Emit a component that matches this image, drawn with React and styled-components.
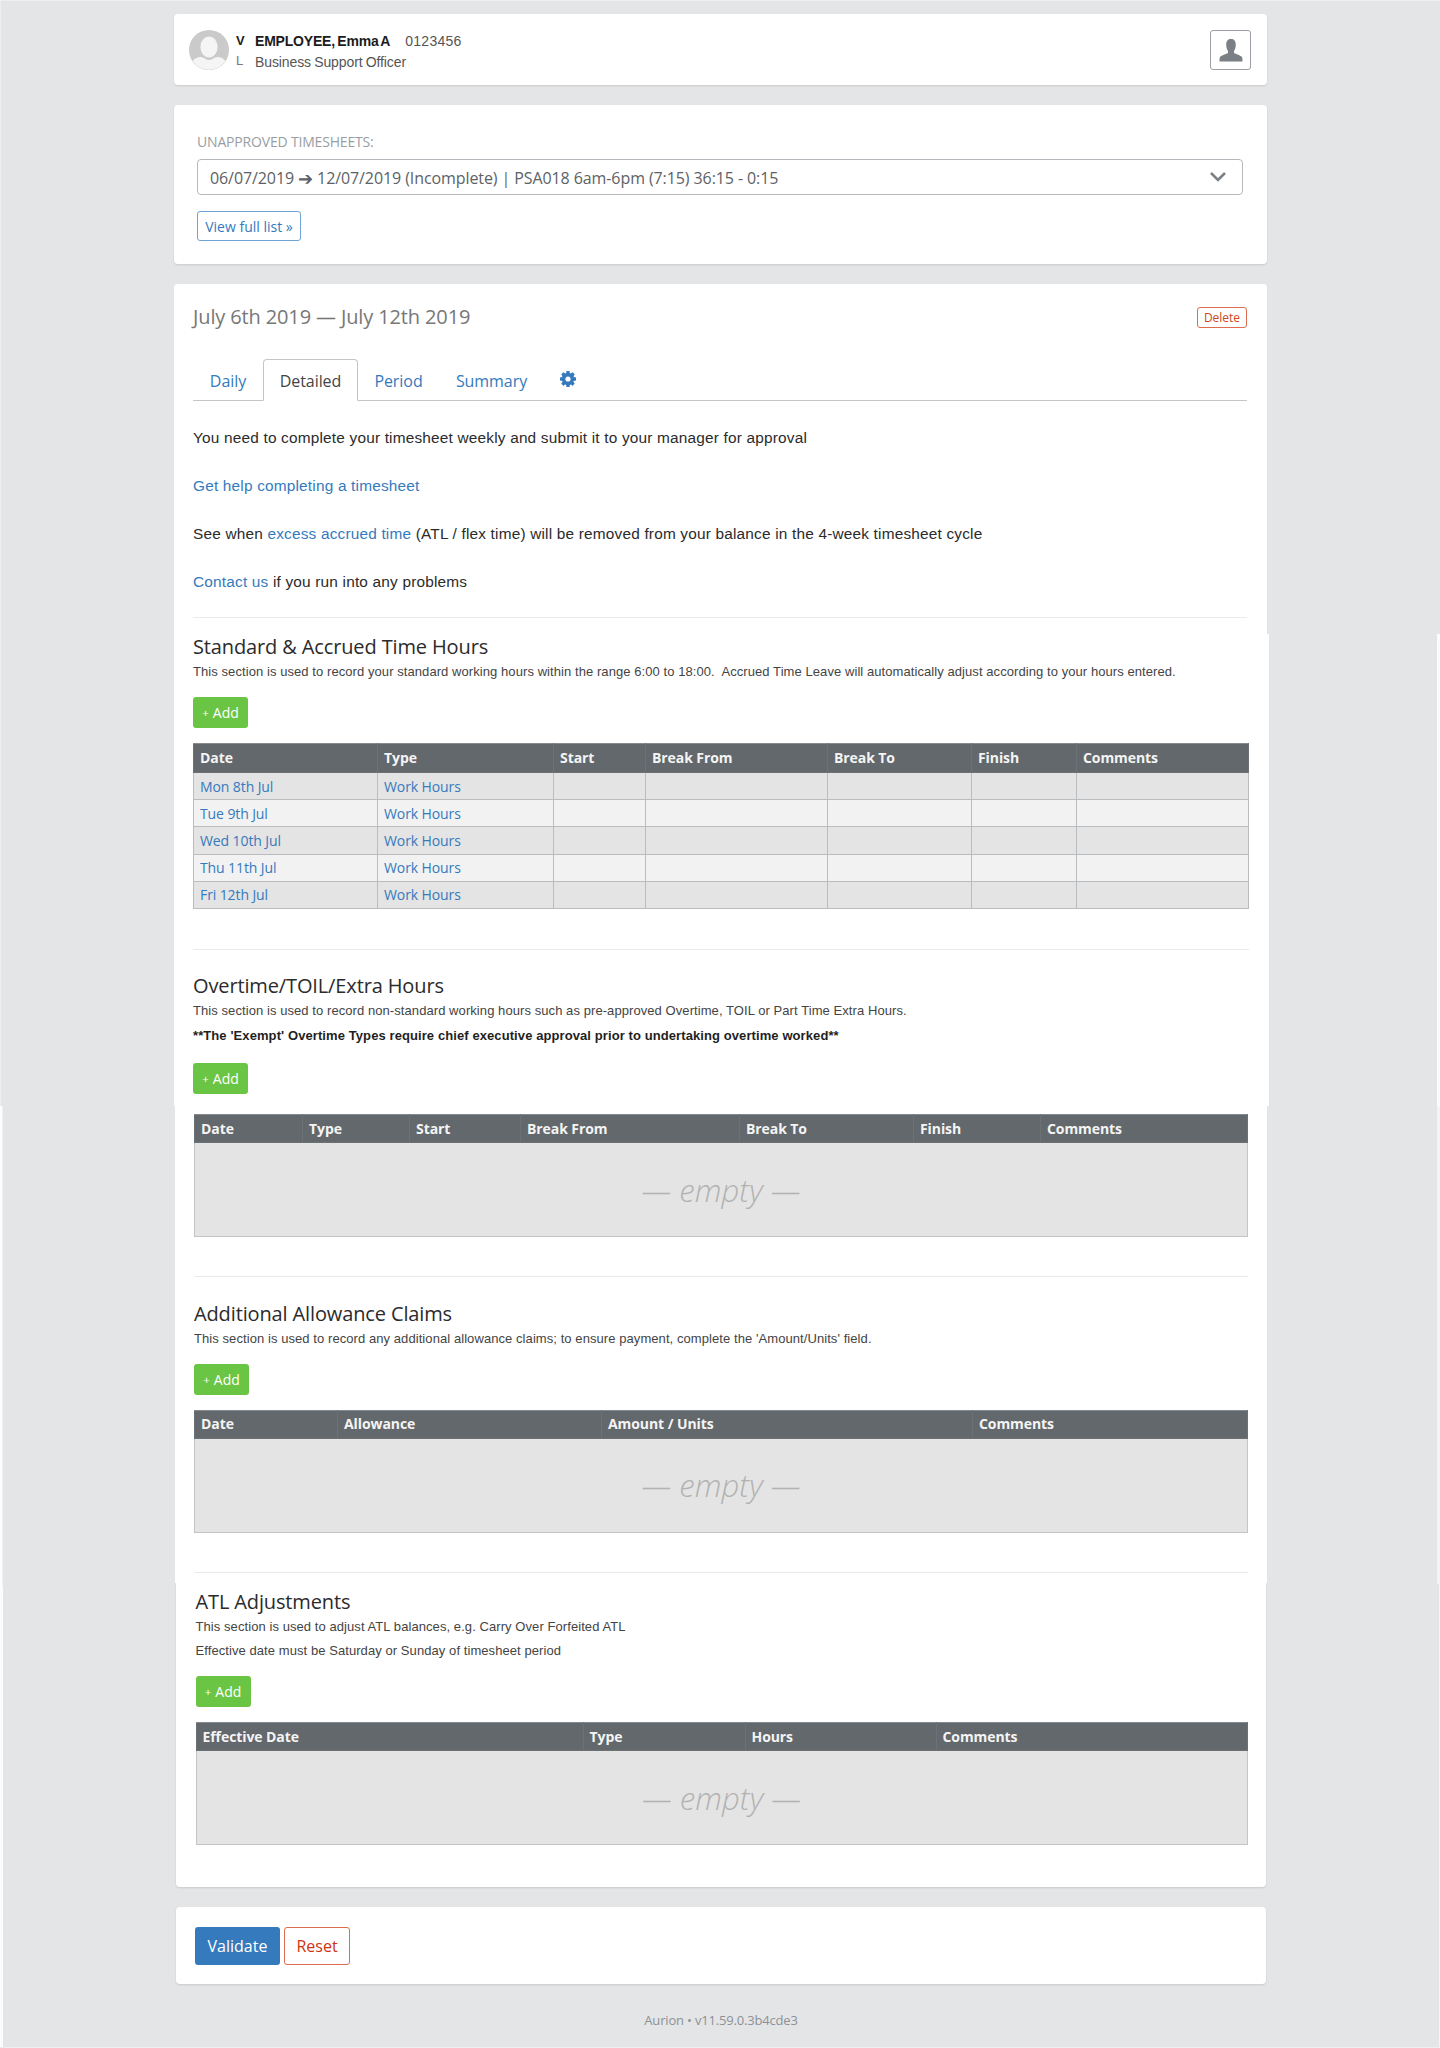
import React from "react";
import styled, { createGlobalStyle, css } from "styled-components";

const sans = `"Open Sans", "Noto Sans", sans-serif`;
const arial = `"Liberation Sans", Arial, sans-serif`;

const Global = createGlobalStyle`
  *, *::before, *::after { box-sizing: border-box; }
  body { margin: 0; background: #e4e5e7; font-family: ${sans}; color: #222; }
`;

/* Thin light strips run down both outer edges of the page. */
const Page = styled.div`
  height: 2048px;
  padding: 13px 0 0;
  border-top: 1px solid #edeef0;
  border-bottom: 1px solid #edeef0;
  overflow: hidden;
  display: flex;
  flex-direction: column;
  background:
    linear-gradient(90deg, #fdfdfd 2px, #f0f2f4 2px) 0 1105px / 3px 480px no-repeat,
    linear-gradient(#fcfcfc, #fcfcfc) 0 1585px / 3px 462px no-repeat,
    linear-gradient(#eeeff1, #eeeff1) 0 0 / 1px 1105px no-repeat,
    linear-gradient(#fcfcfc, #fcfcfc) 1437px 633px / 3px 472px no-repeat,
    linear-gradient(#f4f4f5, #f4f4f5) 1437px 1105px / 3px 478px no-repeat,
    linear-gradient(#f4f4f5, #f4f4f5) 1439px 1583px / 1px 464px no-repeat,
    #e4e5e7;
`;

const Card = styled.section`
  background: #fff;
  border-radius: 4px;
  box-shadow: 0 1px 2px rgba(0, 0, 0, 0.12);
  width: ${(p) => p.$w || 1093}px;
  height: ${(p) => p.$h}px;
  margin: 0 0 20px ${(p) => p.$x || 174}px;
  flex: none;
`;

const Profile = styled(Card)`
  display: flex;
  align-items: flex-start;
  padding: 16px 16px 0 15px;
`;

const Avatar = styled.svg`
  width: 40px;
  height: 40px;
  flex: none;
`;

const Initials = styled.div`
  width: 10px;
  margin-left: 7px;
  font: 400 13px/19px ${arial};
  color: #777;
  display: flex;
  flex-direction: column;
  b { color: #222; line-height: 21px; }
`;

const Identity = styled.div`
  margin: 1px 0 0 9px;
  font: 400 14px/20.500px ${arial};
  color: #555;
  flex: 1;
  white-space: nowrap;
`;

const Name = styled.b`
  color: #1c1c1c;
  margin-right: 15px;
  letter-spacing: -0.2px;
  word-spacing: -1.3px;
`;

const StaffNumber = styled.span`
  letter-spacing: 0.25px;
`;

const Role = styled.div`
  letter-spacing: -0.1px;
  word-spacing: -0.6px;
`;

const UserButton = styled.button`
  width: 41px;
  height: 40px;
  padding: 0;
  border: 1px solid #9aa0a5;
  border-radius: 3px;
  background: #fff;
  display: flex;
  align-items: center;
  justify-content: center;
`;

const Picker = styled(Card)`
  padding: 24px 24px 0 23px;
`;

const Label = styled.div`
  font-size: 14px;
  line-height: 25px;
  color: #999ea3;
  letter-spacing: -0.18px;
`;

const Select = styled.div`
  margin: 5px 0 16px;
  height: 36px;
  border: 1px solid #b4b8bc;
  border-radius: 4px;
  display: flex;
  align-items: center;
  justify-content: space-between;
  padding: 0 16px 0 12px;
  font-size: 16px;
  line-height: 34px;
  color: #5d6266;
`;

const Period = styled.span`
  display: flex;
  padding-top: 2px;
  white-space: pre;
  letter-spacing: -0.09px;
`;

const Arrow = styled.span`
  font-size: 18px;
`;

const outline = css`
  background: #fff;
  border: 1px solid ${(p) => p.$line};
  color: ${(p) => p.$color};
`;

const Button = styled.button`
  font-family: ${sans};
  font-size: ${(p) => p.$fs || 14}px;
  width: ${(p) => p.$w}px;
  height: ${(p) => p.$h}px;
  margin: ${(p) => p.$mt || 0}px 0 0;
  padding: 0;
  border: 0;
  border-radius: 3px;
  background: ${(p) => p.$bg || "#fff"};
  color: #fff;
  display: flex;
  align-items: center;
  justify-content: center;
  white-space: nowrap;
  ${(p) => p.$line && outline}
`;

const Plus = styled.span`
  font-size: 11.500px;
  margin-right: 4px;
`;

const Sheet = styled.main`
  display: flex;
  flex-direction: column;
  margin-bottom: 20px;
  flex: none;
`;

const Part = styled.section`
  background: #fff;
  width: ${(p) => p.$w}px;
  height: ${(p) => p.$h}px;
  margin-left: ${(p) => p.$x}px;
  padding: ${(p) => p.$pad};
  display: flow-root;
  border-radius: ${(p) => (p.$first ? "4px 4px 0 0" : p.$last ? "0 0 4px 4px" : "0")};
  box-shadow: ${(p) => (p.$last ? "0 1px 2px rgba(0,0,0,.12)" : "none")};
`;

const TitleRow = styled.div`
  display: flex;
  justify-content: space-between;
  align-items: center;
  height: 26px;
`;

const Title = styled.h1`
  margin: 0;
  font-weight: 400;
  font-size: 20px;
  line-height: 26px;
  color: #777;
  letter-spacing: -0.13px;
`;

const Tabs = styled.nav`
  margin-top: 29px;
  height: 42px;
  border-bottom: 1px solid #c3c6c9;
  display: flex;
`;

const Tab = styled.a`
  width: ${(p) => p.$w}px;
  height: 42px;
  font-size: 16px;
  line-height: 44px;
  letter-spacing: -0.06px;
  text-align: center;
  color: #357abd;
  ${(p) =>
    p.$active &&
    css`
      color: #444;
      background: #fff;
      border: 1px solid #c3c6c9;
      border-bottom-color: #fff;
      border-radius: 4px 4px 0 0;
      line-height: 42px;
    `}
`;

const Gear = styled.svg`
  width: 16px;
  height: 16px;
  margin: 12px 0 0 16px;
`;

const Note = styled.p`
  margin: 0;
  font: 400 15.400px/48.100px ${arial};
  color: #2b2b2b;
  white-space: nowrap;
  letter-spacing: 0.186px;
  a { color: #357abd; }
`;

const Notes = styled.div`
  margin-top: 12.500px;
`;

const Rule = styled.hr`
  border: 0;
  height: 1px;
  background: #eaeaec;
  margin: ${(p) => p.$mt}px 0 0;
`;

const Heading = styled.h2`
  margin: ${(p) => p.$mt}px 0 0;
  font-weight: 400;
  font-size: 20px;
  line-height: 28px;
  color: #2b2b2b;
  letter-spacing: -0.13px;
`;

const Desc = styled.p`
  margin: 0;
  font: ${(p) => (p.$bold ? 700 : 400)} 13px/${(p) => p.$lh || 22}px ${arial};
  color: ${(p) => (p.$bold ? "#1f1f1f" : "#444")};
  letter-spacing: ${(p) => (p.$bold ? 0.09 : 0.073)}px;
  white-space: pre;
`;

const AddRow = styled.div`
  margin: ${(p) => p.$mt}px 0 ${(p) => p.$mb}px;
`;

const Table = styled.table`
  border-collapse: collapse;
  table-layout: fixed;
  width: ${(p) => p.$w}px;
`;

const Th = styled.th`
  height: ${(p) => p.$h}px;
  padding: 0 6px;
  background: #63686c;
  border: 1px solid #6c7175;
  border-top-color: #868b8f;
  color: #f4f4f4;
  text-align: left;
  font-size: 14px;
  font-weight: 700;
  line-height: 20px;
  letter-spacing: -0.08px;
`;

const Td = styled.td`
  height: 27.200px;
  padding: 1px 6px 0;
  background: ${(p) => (p.$odd ? "#f2f2f2" : "#e4e4e4")};
  border: 1px solid #b9bdc0;
  color: #357abd;
  font-size: 14px;
  line-height: 20px;
  letter-spacing: -0.1px;
`;

const Empty = styled.td`
  height: 94px;
  background: #e4e4e4;
  border: 1px solid #c2c5c8;
  text-align: center;
  font: italic 300 31.200px/40px ${sans};
  color: #b2b2b2;
  padding: 0;
`;

const Actions = styled(Card)`
  display: flex;
  gap: 4px;
  padding: 20px 19px;
`;

const Footer = styled.footer`
  margin-top: 6px;
  padding-left: 2px;
  text-align: center;
  font-size: 13px;
  line-height: 20px;
  letter-spacing: -0.18px;
  color: #8c9196;
`;

function Add() {
  return <Button $w={55} $h={31} $bg="#6bc544"><Plus>+</Plus>Add</Button>;
}

function Grid({ width, columns, rows }) {
  return (
    <Table $w={width}>
      <colgroup>{columns.map(([n, w]) => <col key={n} style={{ width: w }} />)}</colgroup>
      <thead><tr>{columns.map(([n]) => <Th key={n} $h={rows ? 29 : 28}>{n}</Th>)}</tr></thead>
      <tbody>
        {rows ? rows.map((r, i) => (
          <tr key={r}>
            {columns.map(([n], c) => (
              <Td key={n} $odd={i % 2 === 1}>{c === 0 ? r : c === 1 ? "Work Hours" : ""}</Td>
            ))}
          </tr>
        )) : <tr><Empty colSpan={columns.length}>— empty —</Empty></tr>}
      </tbody>
    </Table>
  );
}

export default function App() {
  return (
    <>
      <Global />
      <Page>
        <Profile $h={71}>
          <Avatar viewBox="0 0 40 40">
            <circle cx="20" cy="20" r="20" fill="#cacaca" />
            <ellipse cx="20" cy="17" rx="8.6" ry="10.5" fill="#f5f5f5" />
            <path d="M3.5 31C7 27 12 26 15 28Q20 32 25 28C29 26 33 27 36.500 31A20 20 0 0 1 3.500 31Z" fill="#f5f5f5" />
          </Avatar>
          <Initials><b>V</b><span>L</span></Initials>
          <Identity>
            <div><Name>EMPLOYEE, Emma A</Name><StaffNumber>0123456</StaffNumber></div>
            <Role>Business Support Officer</Role>
          </Identity>
          <UserButton>
            <svg width="24" height="23" viewBox="0 0 24 23">
              <path d="M12 0C9 0 7.200 2 7.200 5.500C7.200 8.500 8.200 11 9 12V14C6 15.500 3 16.300 1.500 17.500C.6 18.300.5 20 .5 22.500H23.500C23.500 20 23.400 18.300 22.500 17.500C21 16.300 18 15.500 15 14V12C15.800 11 16.800 8.500 16.800 5.500C16.800 2 15 0 12 0Z" fill="#7a8085" />
            </svg>
          </UserButton>
        </Profile>

        <Picker $h={159}>
          <Label>UNAPPROVED TIMESHEETS:</Label>
          <Select>
            <Period>06/07/2019 <Arrow>➔</Arrow> 12/07/2019 (Incomplete) | PSA018 6am-6pm (7:15) 36:15 - 0:15</Period>
            <svg width="16" height="10" viewBox="0 0 16 10" fill="none" stroke="#7a8085" strokeWidth="2.600"><path d="M1 1L8 8L15 1" /></svg>
          </Select>
          <Button $w={104} $h={30} $line="#6ea3d6" $color="#357abd">View full list »</Button>
        </Picker>

        <Sheet>
          <Part $first $x={174} $w={1093} $h={350} $pad="20px 20px 0 19px">
            <TitleRow>
              <Title>July 6th 2019 — July 12th 2019</Title>
              <Button $w={50} $h={21} $fs={12} $mt={1} $line="#dd6b4d" $color="#cf4520">Delete</Button>
            </TitleRow>
            <Tabs>
              <Tab $w={70}>Daily</Tab>
              <Tab $w={95} $active>Detailed</Tab>
              <Tab $w={81}>Period</Tab>
              <Tab $w={105}>Summary</Tab>
              <Gear viewBox="0 0 16 16">
                <g fill="#357abd">
                  {[0, 45, 90, 135].map((a) => <rect key={a} x="6.300" y="0" width="3.400" height="16" rx=".6" transform={`rotate(${a} 8 8)`} />)}
                  <circle cx="8" cy="8" r="6.200" />
                </g>
                <circle cx="8" cy="8" r="2.600" fill="#fff" />
              </Gear>
            </Tabs>
            <Notes>
              <Note>You need to complete your timesheet weekly and submit it to your manager for approval</Note>
              <Note><a>Get help completing a timesheet</a></Note>
              <Note>See when <a>excess accrued time</a> (ATL / flex time) will be removed from your balance in the 4-week timesheet cycle</Note>
              <Note><a>Contact us</a> if you run into any problems</Note>
            </Notes>
            <Rule $mt={11} />
          </Part>

          <Part $x={174} $w={1095} $h={472} $pad="0 20px 0 19px">
            <Heading $mt={-1}>Standard &amp; Accrued Time Hours</Heading>
            <Desc>This section is used to record your standard working hours within the range 6:00 to 18:00.  Accrued Time Leave will automatically adjust according to your hours entered.</Desc>
            <AddRow $mt={14} $mb={15}><Add /></AddRow>
            <Grid width={1055} columns={[["Date", 184], ["Type", 176], ["Start", 92], ["Break From", 182], ["Break To", 144], ["Finish", 105], ["Comments", 172]]}
              rows={["Mon 8th Jul", "Tue 9th Jul", "Wed 10th Jul", "Thu 11th Jul", "Fri 12th Jul"]} />
            <Rule $mt={40} />
            <Heading $mt={22}>Overtime/TOIL/Extra Hours</Heading>
            <Desc>This section is used to record non-standard working hours such as pre-approved Overtime, TOIL or Part Time Extra Hours.</Desc>
            <Desc $bold $lh={27}>**The 'Exempt' Overtime Types require chief executive approval prior to undertaking overtime worked**</Desc>
            <AddRow $mt={14} $mb={0}><Add /></AddRow>
          </Part>

          <Part $x={175} $w={1092} $h={477} $pad="8px 19px 0 19px">
            <Grid width={1053} columns={[["Date", 108], ["Type", 107], ["Start", 111], ["Break From", 219], ["Break To", 174], ["Finish", 127], ["Comments", 207]]} />
            <Rule $mt={39} />
            <Heading $mt={22.5}>Additional Allowance Claims</Heading>
            <Desc>This section is used to record any additional allowance claims; to ensure payment, complete the 'Amount/Units' field.</Desc>
            <AddRow $mt={14} $mb={15}><Add /></AddRow>
            <Grid width={1053} columns={[["Date", 143], ["Allowance", 264], ["Amount / Units", 371], ["Comments", 275]]} />
            <Rule $mt={39} />
          </Part>

          <Part $last $x={176} $w={1090} $h={304} $pad="5px 19px 0 19.5px">
            <Heading $mt={0}>ATL Adjustments</Heading>
            <Desc>This section is used to adjust ATL balances, e.g. Carry Over Forfeited ATL</Desc>
            <Desc $lh={26}>Effective date must be Saturday or Sunday of timesheet period</Desc>
            <AddRow $mt={12} $mb={15}><Add /></AddRow>
            <Grid width={1051} columns={[["Effective Date", 387], ["Type", 162], ["Hours", 191], ["Comments", 311]]} />
          </Part>
        </Sheet>

        <Actions $x={176} $w={1090} $h={77}>
          <Button $w={85} $h={38} $fs={16} $bg="#357abd">Validate</Button>
          <Button $w={66} $h={38} $fs={16} $line="#dd6b4d" $color="#cf3310">Reset</Button>
        </Actions>
        <Footer>Aurion • v11.59.0.3b4cde3</Footer>
      </Page>
    </>
  );
}
